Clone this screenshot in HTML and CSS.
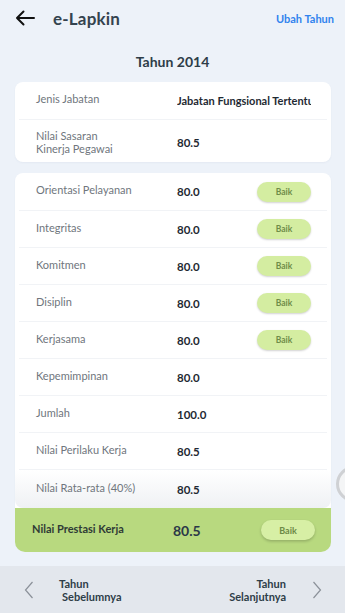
FILE: index.html
```html
<!DOCTYPE html>
<html>
<head>
<meta charset="utf-8">
<link rel="stylesheet" href="styles.css">
</head>
<body>
<div class="screen">
  <header class="header">
    <svg class="back" width="20" height="16" viewBox="0 0 20 16"><path d="M19 8H2M8.5 1.5L2 8l6.5 6.5" fill="none" stroke="#111" stroke-width="2" stroke-linecap="round" stroke-linejoin="round"/></svg>
    <div class="title">e-Lapkin</div>
    <div class="action">Ubah Tahun</div>
  </header>
  <div class="year">Tahun 2014</div>
  <main class="content">
    <section class="card">
      <div class="row">
        <div class="label">Jenis Jabatan</div>
        <div class="value clip">Jabatan Fungsional Tertentu</div>
      </div>
      <div class="row tall">
        <div class="label">Nilai Sasaran<br>Kinerja Pegawai</div>
        <div class="value">80.5</div>
      </div>
    </section>
    <section class="card card2">
      <div class="row"><div class="label">Orientasi Pelayanan</div><div class="value">80.0</div><span class="badge">Baik</span></div>
      <div class="row"><div class="label">Integritas</div><div class="value">80.0</div><span class="badge">Baik</span></div>
      <div class="row"><div class="label">Komitmen</div><div class="value">80.0</div><span class="badge">Baik</span></div>
      <div class="row"><div class="label">Disiplin</div><div class="value">80.0</div><span class="badge">Baik</span></div>
      <div class="row"><div class="label">Kerjasama</div><div class="value">80.0</div><span class="badge">Baik</span></div>
      <div class="row"><div class="label">Kepemimpinan</div><div class="value">80.0</div></div>
      <div class="row"><div class="label">Jumlah</div><div class="value">100.0</div></div>
      <div class="row"><div class="label">Nilai Perilaku Kerja</div><div class="value">80.5</div></div>
      <div class="row last"><div class="label">Nilai Rata-rata (40%)</div><div class="value">80.5</div></div>
    </section>
    <section class="summary">
      <div class="s-label">Nilai Prestasi Kerja</div>
      <div class="s-value">80.5</div>
      <span class="badge big">Baik</span>
    </section>
  </main>
  <nav class="bottom">
    <div class="nav-item">
      <svg width="10" height="18" viewBox="0 0 10 18"><path d="M8.5 1L1.5 9l7 8" fill="none" stroke="#8b9199" stroke-width="1.2"/></svg>
      <div class="nav-text left">Tahun<br><span class="indent">Sebelumnya</span></div>
    </div>
    <div class="nav-item">
      <div class="nav-text right">Tahun<br>Selanjutnya</div>
      <svg width="10" height="18" viewBox="0 0 10 18"><path d="M1.5 1l7 8-7 8" fill="none" stroke="#8b9199" stroke-width="1.2"/></svg>
    </div>
  </nav>
  <div class="float-ring"></div>
</div>
</body>
</html>
```
FILE: styles.css
```css
* { box-sizing: border-box; }
html, body { margin: 0; padding: 0; }
body {
  background: #edf2f9;
  font-family: "Lato", "Open Sans", sans-serif;
  color: #2c3a45;
}
.screen {
  position: relative;
  width: 345px;
  height: 613px;
  overflow: hidden;
  display: flex;
  flex-direction: column;
}
.header {
  height: 34px;
  display: flex;
  align-items: center;
  padding: 2px 11px 0 15px;
}
.back { flex: none; }
.title {
  margin-left: 18px;
  font-size: 17px;
  font-weight: 700;
  color: #34434f;
  letter-spacing: 0.2px;
}
.action {
  margin-left: auto;
  font-size: 11px;
  font-weight: 700;
  color: #3183ee;
}
.year {
  text-align: center;
  font-size: 14px;
  font-weight: 700;
  color: #2e3d48;
  margin-top: 18px;
  line-height: 20px;
}
.content {
  padding: 10px 14px 0 15px;
  display: flex;
  flex-direction: column;
}
.card {
  background: #fff;
  border-radius: 8px;
  padding: 0 4px;
  box-shadow: 0 1px 2px rgba(60, 80, 110, 0.05);
}
.card2 {
  margin-top: 11px;
  border-radius: 8px 8px 0 0;
}
.row {
  height: 37px;
  display: flex;
  align-items: center;
  border-bottom: 1px solid #f1f3f6;
  padding-left: 17px;
}
.card > .row:first-child { height: 38px; }
.card2 > .row:first-child { height: 38px; }
.row.tall { height: 42px; border-bottom: none; padding-top: 2px; }
.row.last {
  border-bottom: none;
  height: 38px;
  margin: 0 -4px;
  padding-left: 21px;
  background: linear-gradient(#ffffff, #eff1f4);
  border-radius: 0 0 8px 8px;
}
.label {
  width: 141px;
  flex: none;
  font-size: 11px;
  line-height: 13px;
  color: #6f767d;
  margin-top: -4px;
}
.row.tall .label { margin-top: 0; }
.value {
  font-size: 11.5px;
  font-weight: 700;
  color: #1f2a33;
}
.value.clip {
  font-size: 11px;
  width: 134px;
  white-space: nowrap;
  overflow: hidden;
}
.badge {
  margin-left: auto;
  margin-right: 16px;
  width: 54px;
  height: 20px;
  border-radius: 10px;
  background: #d4eda1;
  box-shadow: 0 1px 2px rgba(0, 0, 0, 0.18);
  font-size: 8.5px;
  font-weight: 700;
  color: #6f8c48;
  display: flex;
  align-items: center;
  justify-content: center;
}
.summary {
  height: 44px;
  background: #b8d97f;
  border-radius: 0 0 10px 10px;
  display: flex;
  align-items: center;
  padding-left: 17px;
}
.s-label {
  width: 141px;
  font-size: 11px;
  font-weight: 700;
  color: #2f3b36;
  margin-top: -4px;
}
.s-value {
  font-size: 14px;
  font-weight: 700;
  color: #2b3848;
}
.badge.big {
  margin-right: 16px;
  background: #d7efa5;
  font-size: 9px;
  color: #6c8a46;
  box-shadow: 0 1.5px 3px rgba(0, 0, 0, 0.2);
}
.bottom {
  margin-top: auto;
  height: 47px;
  background: #e3e7ed;
  display: flex;
  align-items: center;
  justify-content: space-between;
  padding: 0 23px 0 24px;
}
.nav-item {
  display: flex;
  align-items: center;
}
.nav-text {
  font-size: 11px;
  font-weight: 700;
  line-height: 13px;
  color: #2e3d48;
}
.nav-text.left { margin-left: 25px; }
.nav-text.right { margin-right: 26px; text-align: right; }
.indent { padding-left: 3px; }
.float-ring {
  position: absolute;
  left: 336px;
  top: 466px;
  width: 36px;
  height: 36px;
  border-radius: 50%;
  border: 3px solid #cfd1d4;
  background: #f4f5f6;
}
```
